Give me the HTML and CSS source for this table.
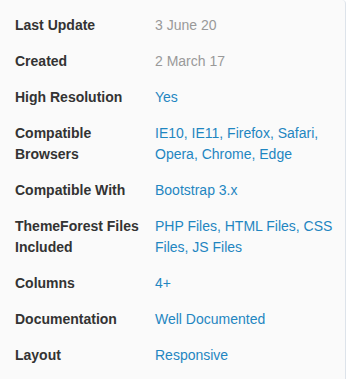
FILE: index.html
```html
<!DOCTYPE html>
<html>
  <head>
    <title>Item Details</title>
    <link rel="stylesheet" href="styles.css">
  </head>
  <body>
    <div class="meta-card">
      <dl class="meta-list">
        <dt>Last Update</dt>
        <dd class="muted">3 June 20</dd>

        <dt>Created</dt>
        <dd class="muted">2 March 17</dd>

        <dt>High Resolution</dt>
        <dd><a href="#">Yes</a></dd>

        <dt>Compatible Browsers</dt>
        <dd>IE10, IE11, Firefox, Safari, Opera, Chrome, Edge</dd>

        <dt>Compatible With</dt>
        <dd><a href="#">Bootstrap 3.x</a></dd>

        <dt>ThemeForest Files Included</dt>
        <dd>PHP Files, HTML Files, CSS Files, JS Files</dd>

        <dt>Columns</dt>
        <dd><a href="#">4+</a></dd>

        <dt>Documentation</dt>
        <dd><a href="#">Well Documented</a></dd>

        <dt>Layout</dt>
        <dd><a href="#">Responsive</a></dd>
      </dl>
    </div>
  </body>
</html>
```

FILE: styles.css
```css
body {
  margin: 0;
  background: #fff;
  font-family: "Liberation Sans", Arial, sans-serif;
  font-size: 14px;
  line-height: 21px;
}
.meta-card {
  width: 346px;
  min-height: 390px;
  box-sizing: border-box;
  background: #fafafa;
  border-right: 1px solid #dde3ea;
  border-top-right-radius: 4px;
  padding: 7px 0 0 15px;
}
.meta-list {
  display: grid;
  grid-template-columns: 140px 180px;
  margin: 0;
}
.meta-list dt,
.meta-list dd {
  margin: 0;
  padding: 8px 0 7px;
}
.meta-list dt {
  font-weight: bold;
  color: #333;
  padding-right: 10px;
}
.meta-list dd {
  color: #1f86c1;
}
.meta-list dd.muted {
  color: #999;
}
.meta-list a {
  color: #1f86c1;
  text-decoration: none;
}
```
